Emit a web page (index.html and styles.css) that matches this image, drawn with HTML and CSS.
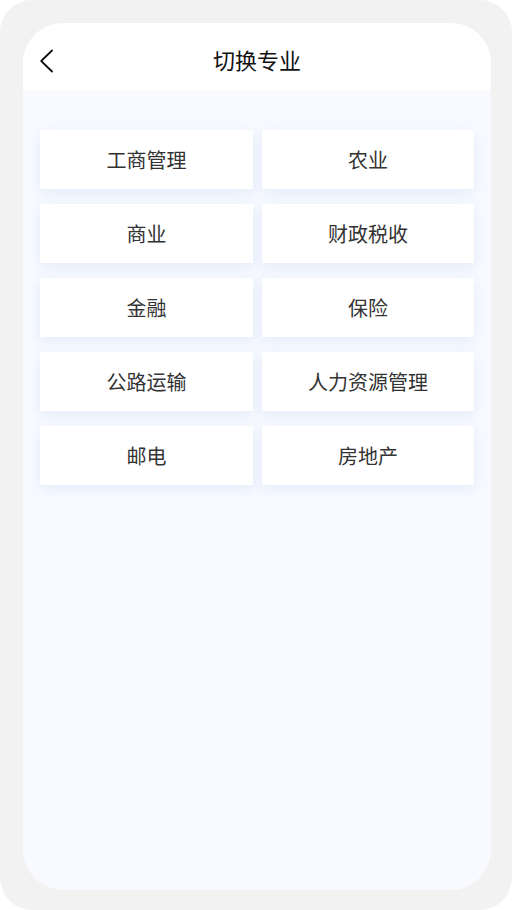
FILE: index.html
```html
<!DOCTYPE html>
<html lang="zh-CN">
<head>
<meta charset="utf-8">
<title>切换专业</title>
<link rel="stylesheet" href="styles.css">
</head>
<body>
<div class="device">
  <div class="screen">
    <header class="header">
      <span class="back">
        <svg width="16" height="24" viewBox="0 0 16 24"><path d="M14 1.5 L3.2 12 L14 22.5" fill="none" stroke="#111" stroke-width="1.8" stroke-linecap="round" stroke-linejoin="round"/></svg>
      </span>
      <h1 class="title">切换专业</h1>
    </header>
    <main class="grid">
      <div class="card">工商管理</div>
      <div class="card">农业</div>
      <div class="card">商业</div>
      <div class="card">财政税收</div>
      <div class="card">金融</div>
      <div class="card">保险</div>
      <div class="card">公路运输</div>
      <div class="card">人力资源管理</div>
      <div class="card">邮电</div>
      <div class="card">房地产</div>
    </main>
  </div>
</div>
</body>
</html>
```
FILE: styles.css
```css
html, body {
  margin: 0;
  padding: 0;
  background: #ffffff;
}
body {
  font-family: "Noto Sans CJK SC", "Noto Sans", sans-serif;
}
.device {
  width: 512px;
  height: 910px;
  box-sizing: border-box;
  background: #f2f2f2;
  border-radius: 32px;
  padding: 23px 21px 20px 23px;
}
.screen {
  height: 867px;
  border-radius: 40px;
  overflow: hidden;
  background: #f8faff;
  display: flex;
  flex-direction: column;
}
.header {
  height: 67px;
  box-sizing: border-box;
  padding-top: 4px;
  background: #ffffff;
  display: flex;
  align-items: center;
  justify-content: center;
  position: relative;
  flex-shrink: 0;
}
.back {
  position: absolute;
  left: 15px;
  top: 26px;
  width: 16px;
  height: 24px;
  display: block;
}
.back svg { display: block; }
.title {
  margin: 0;
  font-size: 22px;
  font-weight: 400;
  color: #111111;
  line-height: 30px;
}
.grid {
  padding: 40px 17px 0 17px;
  display: grid;
  grid-template-columns: 213px 212px;
  column-gap: 9px;
  row-gap: 15px;
}
.card {
  height: 59px;
  background: #ffffff;
  display: flex;
  align-items: center;
  justify-content: center;
  font-size: 20px;
  color: #333333;
  box-shadow: 0 4px 12px rgba(190, 208, 240, 0.35);
}
```
